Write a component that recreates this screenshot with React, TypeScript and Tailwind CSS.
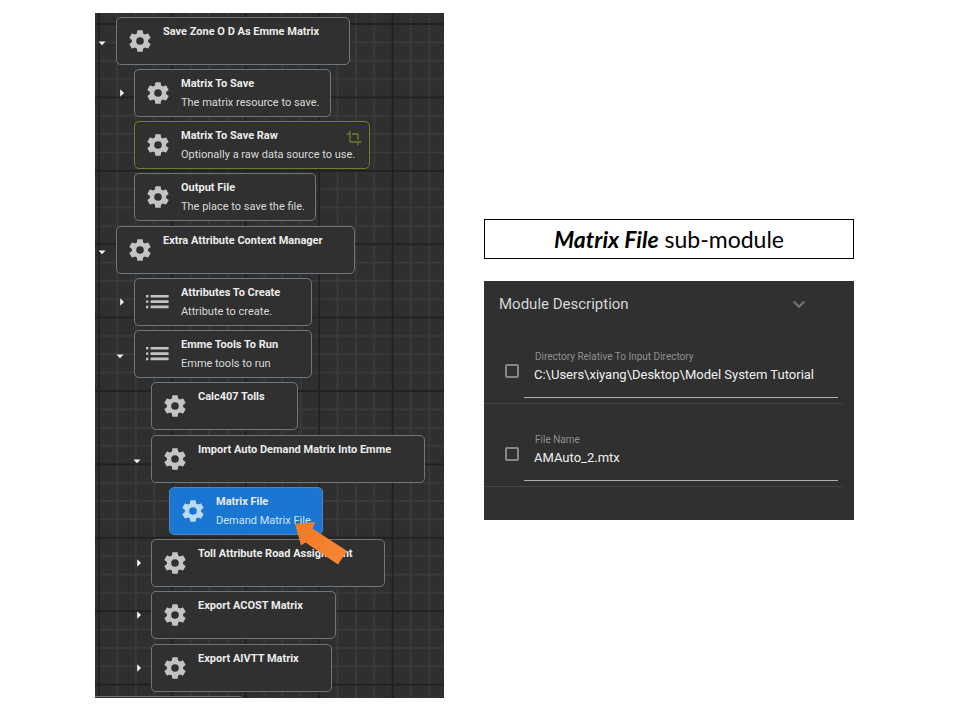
import React from "react";

type Kind = "gear" | "list";
type Toggle = "open" | "closed" | null;

interface TreeNode {
  title: string;
  description?: string;
  kind: Kind;
  toggle: Toggle;
  indent: string;
  width: string;
  tone?: "optional" | "selected";
}

const LEVEL = ["pl-0", "pl-[18px]", "pl-[35px]", "pl-[53px]"];

const NODES: TreeNode[] = [
  { title: "Save Zone O D As Emme Matrix", kind: "gear", toggle: "open", indent: LEVEL[0], width: "w-[234px]" },
  { title: "Matrix To Save", description: "The matrix resource to save.", kind: "gear", toggle: "closed", indent: LEVEL[1], width: "w-[197px]" },
  { title: "Matrix To Save Raw", description: "Optionally a raw data source to use.", kind: "gear", toggle: null, indent: LEVEL[1], width: "w-[236px]", tone: "optional" },
  { title: "Output File", description: "The place to save the file.", kind: "gear", toggle: null, indent: LEVEL[1], width: "w-[182px]" },
  { title: "Extra Attribute Context Manager", kind: "gear", toggle: "open", indent: LEVEL[0], width: "w-[239px]" },
  { title: "Attributes To Create", description: "Attribute to create.", kind: "list", toggle: "closed", indent: LEVEL[1], width: "w-[178px]" },
  { title: "Emme Tools To Run", description: "Emme tools to run", kind: "list", toggle: "open", indent: LEVEL[1], width: "w-[178px]" },
  { title: "Calc407 Tolls", kind: "gear", toggle: null, indent: LEVEL[2], width: "w-[147px]" },
  { title: "Import Auto Demand Matrix Into Emme", kind: "gear", toggle: "open", indent: LEVEL[2], width: "w-[274px]" },
  { title: "Matrix File", description: "Demand Matrix File", kind: "gear", toggle: null, indent: LEVEL[3], width: "w-[154px]", tone: "selected" },
  { title: "Toll Attribute Road Assignment", kind: "gear", toggle: "closed", indent: LEVEL[2], width: "w-[234px]" },
  { title: "Export ACOST Matrix", kind: "gear", toggle: "closed", indent: LEVEL[2], width: "w-[185px]" },
  { title: "Export AIVTT Matrix", kind: "gear", toggle: "closed", indent: LEVEL[2], width: "w-[181px]" },
];

const FIELDS = [
  { id: "directory", label: "Directory Relative To Input Directory", value: "C:\\Users\\xiyang\\Desktop\\Model System Tutorial" },
  { id: "file-name", label: "File Name", value: "AMAuto_2.mtx" },
];

function GridBackdrop() {
  return (
    <svg className="absolute inset-0 h-full w-full" aria-hidden="true">
      <defs>
        <pattern id="grid" x="4" y="11" width="73.4" height="73.4" patternUnits="userSpaceOnUse">
          <path d="M18.35 0V73.4M36.7 0V73.4M55.05 0V73.4M0 18.35H73.4M0 36.7H73.4M0 55.05H73.4" stroke="#3b3b3b" strokeWidth="1.6" />
          <path d="M0 0V73.4M73.4 0V73.4M0 0H73.4M0 73.4H73.4" stroke="#212121" strokeWidth="2" />
        </pattern>
      </defs>
      <rect width="100%" height="100%" fill="url(#grid)" />
    </svg>
  );
}

function NodeIcon({ kind, selected }: { kind: Kind; selected: boolean }) {
  const color = selected ? "#bcdaf5" : "#c4c4c4";
  if (kind === "list") {
    return (
      <svg className="h-6 w-6 shrink-0" viewBox="0 0 24 24" fill={color} aria-hidden="true">
        <path d="M1 5h2.4v2.4H1zM1 10.4h2.4v2.4H1zM1 15.8h2.4v2.4H1zM5.6 5h18v2.6h-18zM5.6 10.3h18v2.6h-18zM5.6 15.6h18v2.6h-18z" />
      </svg>
    );
  }
  return (
    <svg className="h-[26px] w-[26px] shrink-0" viewBox="0 0 24 24" fill={color} aria-hidden="true">
      <path d="M12 15.5A3.5 3.5 0 0 1 8.5 12 3.5 3.5 0 0 1 12 8.5a3.5 3.5 0 0 1 3.5 3.5 3.5 3.5 0 0 1-3.5 3.5m7.43-2.53c.04-.32.07-.64.07-.97s-.03-.66-.07-1l2.11-1.63c.19-.15.24-.42.12-.64l-2-3.46c-.12-.22-.39-.31-.61-.22l-2.49 1c-.52-.39-1.06-.73-1.69-.98l-.37-2.65A.506.506 0 0 0 14 2h-4c-.25 0-.46.18-.5.42l-.37 2.65c-.63.25-1.17.59-1.69.98l-2.49-1c-.22-.09-.49 0-.61.22l-2 3.46c-.13.22-.07.49.12.64L4.57 11c-.04.34-.07.67-.07 1s.03.65.07.97l-2.11 1.66c-.19.15-.25.42-.12.64l2 3.46c.12.22.39.3.61.22l2.49-1.01c.52.4 1.06.74 1.69.99l.37 2.65c.04.24.25.42.5.42h4c.25 0 .46-.18.5-.42l.37-2.65c.63-.26 1.17-.59 1.69-.99l2.49 1.01c.22.08.49 0 .61-.22l2-3.46c.12-.22.07-.49-.12-.64z" />
    </svg>
  );
}

function ToggleArrow({ state, title }: { state: Toggle; title: string }) {
  if (!state) return <span className="w-[21px] shrink-0" />;
  return (
    <button type="button" aria-label={title} aria-expanded={state === "open"} className="flex w-[21px] shrink-0 items-center pl-[3px]">
      <svg className="h-3 w-3" viewBox="0 0 12 12" fill="#f4f4f4" aria-hidden="true">
        {state === "open" ? <path d="M.5 6.5h7L4 10.2z" /> : <path d="M4.2 2.2L8 6 4.2 9.8z" />}
      </svg>
    </button>
  );
}

function TreeRow({ node }: { node: TreeNode }) {
  const selected = node.tone === "selected";
  const optional = node.tone === "optional";
  const tone = selected
    ? "border-[#4f87bd] bg-[#1976d2]"
    : optional
      ? "border-[#6b8029] bg-[#303030]"
      : "border-[#6d7780] bg-[#303030]";
  return (
    <li className={`flex h-12 shrink-0 [&:nth-child(4n+1):not(:first-child)]:mt-px ${node.indent}`}>
      <ToggleArrow state={node.toggle} title={node.title} />
      <div className={`flex items-center rounded-[5px] border pl-[10px] ${tone} ${node.width}`}>
        <div className="flex w-9 shrink-0 items-center">
          <NodeIcon kind={node.kind} selected={selected} />
        </div>
        <div className="flex h-full flex-1 flex-col whitespace-nowrap pt-[5px]">
          <div className="text-[11px] leading-[18px] font-bold text-[#ececec]">{node.title}</div>
          {node.description && (
            <div className={`text-[11px] leading-5 ${selected ? "text-[#d3e5f7]" : "text-[#dadada]"}`}>{node.description}</div>
          )}
        </div>
        {optional && (
          <svg className="mt-2 mr-[7px] -ml-6 h-4 w-4 shrink-0 self-start" viewBox="0 0 24 24" fill="#6b8029" aria-hidden="true">
            <path d="M7 17V1H5v4H1v2h4v10a2 2 0 0 0 2 2h10v4h2v-4h4v-2M17 15h2V7c0-1.11-.9-2-2-2H9v2h8z" />
          </svg>
        )}
      </div>
    </li>
  );
}

function ModelTree() {
  return (
    <section className="relative overflow-hidden bg-[#2f2f2f] pt-1">
      <GridBackdrop />
      <ul className="relative flex flex-col gap-1">
        {NODES.map((node) => (
          <TreeRow key={node.title} node={node} />
        ))}
        <li className="h-[2px] w-[147px] rounded-tr-[5px] border-t border-[#6d7780] bg-[#303030]" />
      </ul>
      <svg className="absolute top-[500px] left-[195px] h-[64px] w-[66px]" viewBox="0 0 66 64" aria-hidden="true">
        <defs>
          <linearGradient id="pointer" x1="0" y1="0" x2="1" y2="1">
            <stop offset="0" stopColor="#f07a26" />
            <stop offset="1" stopColor="#f98736" />
          </linearGradient>
        </defs>
        <path d="M5 11L25.5 9L22.5 15.5L57 38L48 51.5L15.5 29.5L11 32.5z" fill="url(#pointer)" />
      </svg>
    </section>
  );
}

function ModuleDescription() {
  return (
    <section className="bg-[#303030] pb-[33px]">
      <header className="flex h-10 items-center justify-between pt-[6px] pr-[49px] pl-[15px]">
        <h2 className="text-[15px] leading-5 text-[#d6d6d6]">Module Description</h2>
        <button type="button" aria-label="Collapse">
          <svg className="h-3 w-3" viewBox="0 0 12 12" fill="none" stroke="#757575" strokeWidth="2" aria-hidden="true">
            <path d="M.7 3.5L6 8.8l5.3-5.3" />
          </svg>
        </button>
      </header>
      {FIELDS.map((field) => (
        <div key={field.id} className="mr-[11px] flex h-[83px] items-end border-b border-[#454545] pb-[5px]">
          <input
            type="checkbox"
            aria-label={`Use ${field.label}`}
            className="mb-5 ml-[21px] h-[14px] w-[14px] shrink-0 appearance-none rounded-[2px] border-2 border-[#868686]"
          />
          <div className="mr-[5px] ml-[5px] flex flex-1 flex-col border-b border-[#b0b0b0] pl-[10px]">
            <label htmlFor={field.id} className="pl-px text-[10px] leading-3 text-[#8f8f8f]">
              {field.label}
            </label>
            <input id={field.id} type="text" defaultValue={field.value} className="mb-[10px] h-6 w-full bg-transparent text-[13px] leading-6 text-[#f0f0f0] outline-none" />
          </div>
        </div>
      ))}
    </section>
  );
}

export default function App() {
  return (
    <main className="grid min-h-screen grid-cols-[349fr_370fr] items-start gap-10 bg-white pt-[13px] pr-[106px] pb-[22px] pl-[95px] font-['Roboto',sans-serif]">
      <ModelTree />
      <div className="flex flex-col gap-[22px] pt-[206px]">
        <h1 className="flex h-10 items-center justify-center border border-black pb-px text-center font-['Lato',sans-serif] text-[23px] leading-7 text-black">
          <span className="whitespace-pre"><em className="font-bold italic">Matrix File</em> sub-module</span>
        </h1>
        <ModuleDescription />
      </div>
    </main>
  );
}
